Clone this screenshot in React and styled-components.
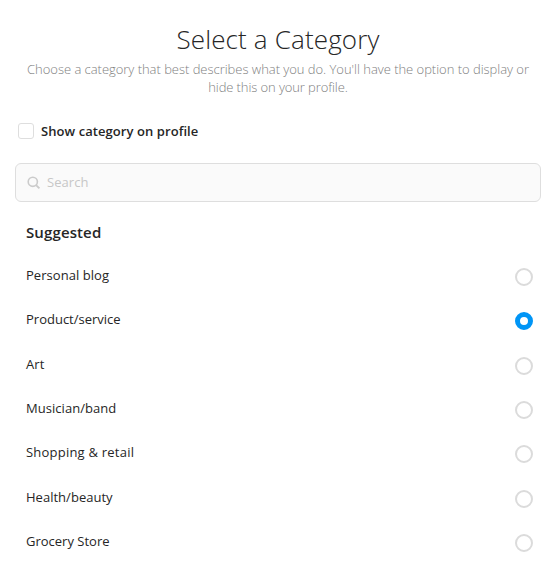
import { useState } from "react";
import styled, { createGlobalStyle } from "styled-components";

const categories = [
  { name: "Personal blog", spacing: "0.05px" },
  { name: "Product/service", spacing: "0" },
  { name: "Art", spacing: "0.1px" },
  { name: "Musician/band", spacing: "0.04px" },
  { name: "Shopping & retail", spacing: "0.22px" },
  { name: "Health/beauty", spacing: "0.02px" },
  { name: "Grocery Store", spacing: "0" },
];

const App = () => {
  const [selected, setSelected] = useState("Product/service");
  const [visible, setVisible] = useState(false);

  return (
    <>
      <GlobalStyle />
      <Container>
        <Title>Select a Category</Title>
        <SubText>
          <Line $spacing="-0.03px">
            Choose a category that best describes what you do. You'll have the
            option to display or
          </Line>
          <Line $spacing="-0.1px">hide this on your profile.</Line>
        </SubText>
        <CheckLabel>
          <Checkbox
            type="checkbox"
            checked={visible}
            onChange={() => setVisible(!visible)}
          />
          Show category on profile
        </CheckLabel>
        <SearchBox>
          <svg width="14" height="14" viewBox="0 0 14 14" fill="none">
            <circle cx="5.8" cy="5.8" r="4.6" stroke="#cbcbcb" strokeWidth="1.6" />
            <path d="M9.1 9.1L12.4 12.4" stroke="#cbcbcb" strokeWidth="1.9" />
          </svg>
          <SearchInput placeholder="Search" />
        </SearchBox>
        <Heading>Suggested</Heading>
        <List>
          {categories.map(({ name, spacing }) => (
            <Row key={name}>
              <Name $spacing={spacing}>{name}</Name>
              <Radio
                type="radio"
                name="category"
                checked={selected === name}
                onChange={() => setSelected(name)}
              />
            </Row>
          ))}
        </List>
      </Container>
    </>
  );
};

export default App;

// Styled Components
const GlobalStyle = createGlobalStyle`
  * {
    box-sizing: border-box;
  }

  body {
    margin: 0;
    background: #fff;
    color: #262626;
    font-family: "Segoe UI", "Open Sans", "Noto Sans", sans-serif;
    overflow: hidden;
  }
`;

const Container = styled.div`
  width: 558px;
  height: 576px;
  padding: 20px 17px 0 15px;
  overflow: hidden;
`;

const Title = styled.h1`
  margin: 0;
  font-size: 26px;
  line-height: 38px;
  font-weight: 300;
  letter-spacing: 0.15px;
  text-align: center;
`;

const SubText = styled.p`
  margin: 2px 0 0;
  color: #808080;
  font-size: 13px;
  line-height: 18px;
  font-weight: 300;
  text-align: center;
`;

const Line = styled.span`
  display: block;
  white-space: nowrap;
  letter-spacing: ${({ $spacing }) => $spacing};
`;

const CheckLabel = styled.label`
  display: flex;
  align-items: center;
  height: 20px;
  margin: 25px 0 0 3px;
  gap: 7px;
  font-size: 13px;
  font-weight: 600;
  letter-spacing: 0.07px;
`;

const Checkbox = styled.input`
  appearance: none;
  width: 16px;
  height: 16px;
  margin: 0;
  border: 1px solid #dedede;
  border-radius: 3px;
  background: #fff;

  &:checked {
    background: #0095f6;
  }
`;

const SearchBox = styled.div`
  display: flex;
  align-items: center;
  height: 39px;
  margin-top: 22px;
  padding: 0 11px;
  gap: 6px;
  border: 1px solid #dedede;
  border-radius: 6px;
  background: #fafafa;
`;

const SearchInput = styled.input`
  flex: 1;
  padding: 0 0 1px;
  border: none;
  outline: none;
  background: none;
  font-family: inherit;
  font-size: 13px;
  letter-spacing: 0.05px;

  &::placeholder {
    color: #c7c7c7;
    opacity: 1;
  }
`;

const Heading = styled.h2`
  margin: 18px 0 0 11px;
  font-size: 15px;
  line-height: 24px;
  font-weight: 600;
  letter-spacing: 0.12px;
`;

const List = styled.div`
  margin-top: 10.8px;
  padding: 0 8px 0 11px;
`;

const Row = styled.label`
  display: flex;
  align-items: center;
  justify-content: space-between;
  height: 44.35px;
`;

const Name = styled.span`
  margin-bottom: 4px;
  font-size: 13px;
  line-height: 18px;
  letter-spacing: ${({ $spacing }) => $spacing};
`;

const Radio = styled.input`
  appearance: none;
  width: 18px;
  height: 18px;
  margin: 0;
  border: 2px solid #dbdbdb;
  border-radius: 50%;
  background: #fff;

  &:checked {
    border: 5px solid #0095f6;
  }
`;
